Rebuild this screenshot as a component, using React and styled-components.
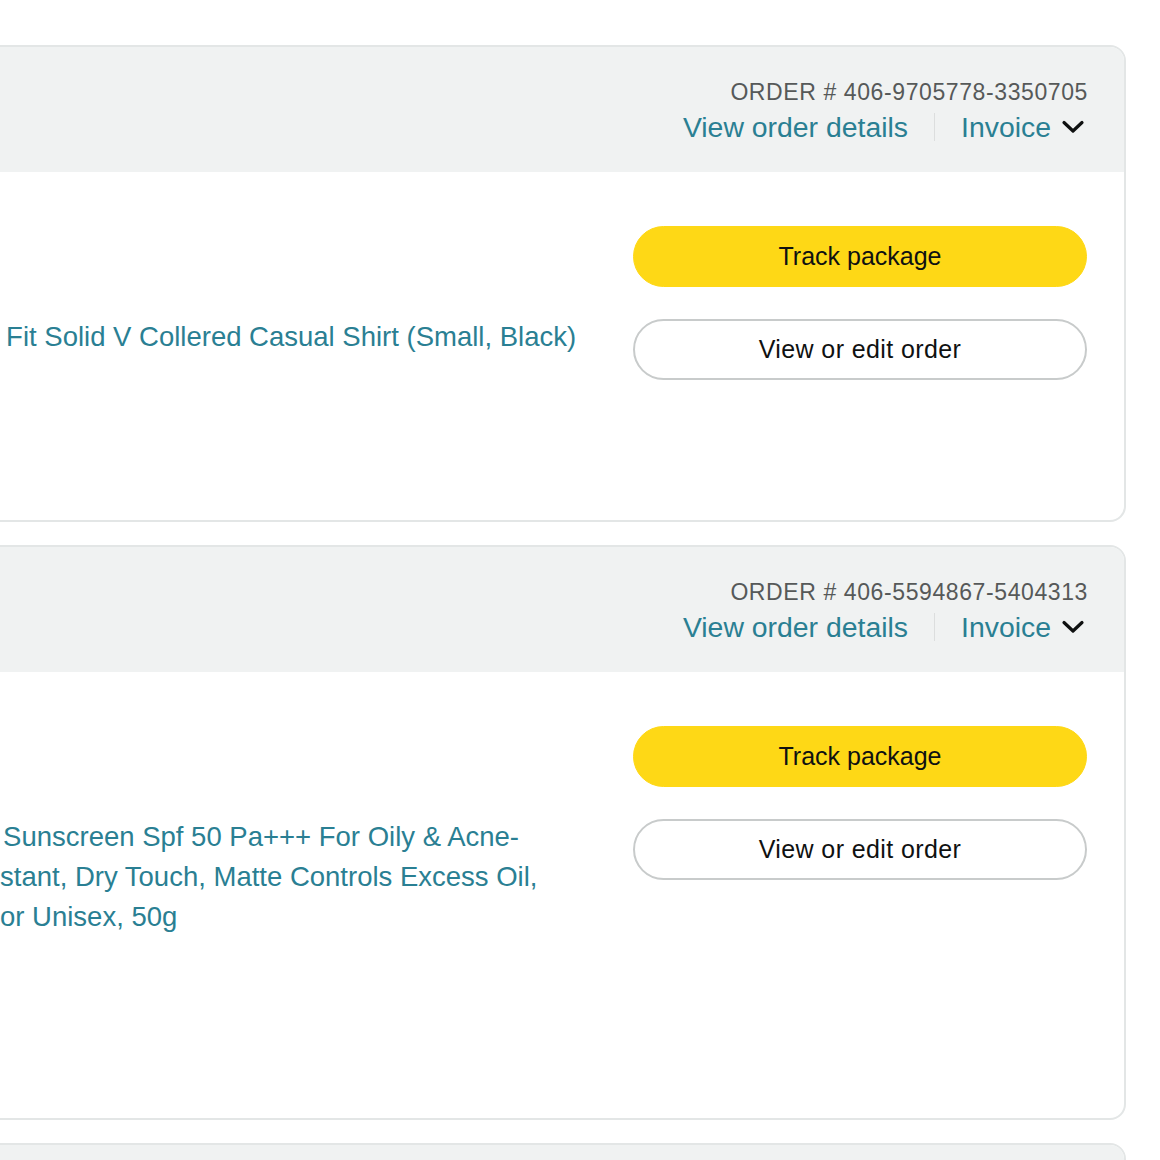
import React from 'react';
import styled, { createGlobalStyle } from 'styled-components';

const orders = [
  {
    id: '406-9705778-3350705',
    lines: ['Slim Fit Solid V Collered Casual Shirt (Small, Black)'],
    bodyHeight: 348,
  },
  {
    id: '406-5594867-5404313',
    lines: [
      'Mild Sunscreen Spf 50 Pa+++ For Oily & Acne-',
      'Resistant, Dry Touch, Matte Controls Excess Oil,',
      'All For Unisex, 50g',
    ],
    bodyHeight: 446,
  },
  {
    id: '406-1120458-7712093',
    lines: ['Cotton Round Neck T-Shirt'],
    bodyHeight: 348,
  },
];

const ChevronDown = () => (
  <svg width="24" height="16" viewBox="0 0 24 16" fill="none">
    <path d="M3 3.5 L12 12 L21 3.5" stroke="#0f1111" strokeWidth="3.2" strokeLinecap="round" strokeLinejoin="round" />
  </svg>
);

const App = () => {
  return (
    <>
      <GlobalStyle />
      <Page>
        <OrderList>
          {orders.map(order => (
            <OrderCard key={order.id}>
              <CardHeader>
                <HeaderRight>
                  <OrderNumber>ORDER # {order.id}</OrderNumber>
                  <HeaderLinks>
                    <TealLink>View order details</TealLink>
                    <Divider />
                    <InvoiceLink>
                      <TealLink>Invoice</TealLink>
                      <ChevronDown />
                    </InvoiceLink>
                  </HeaderLinks>
                </HeaderRight>
              </CardHeader>
              <CardBody $height={order.bodyHeight}>
                <ProductTitle>
                  {order.lines.map((line, index) => (
                    <div key={index}>{line}</div>
                  ))}
                </ProductTitle>
                <Actions>
                  <PillButton $primary>Track package</PillButton>
                  <PillButton>View or edit order</PillButton>
                </Actions>
              </CardBody>
            </OrderCard>
          ))}
        </OrderList>
      </Page>
    </>
  );
};

export default App;

const GlobalStyle = createGlobalStyle`
  html, body {
    margin: 0;
    padding: 0;
    background: #fff;
    overflow: hidden;
  }
  body {
    font-family: "Liberation Sans", Arial, sans-serif;
    color: #0f1111;
  }
`;

const Page = styled.div`
  width: 1160px;
  height: 1160px;
  overflow: hidden;
  padding-top: 45px;
  box-sizing: border-box;
`;

// cards are wider than the view, their left part is cut off
const OrderList = styled.div`
  display: flex;
  flex-direction: column;
  gap: 23px;
  margin-left: -700px;
  margin-right: 34px;
`;

const OrderCard = styled.div`
  border: 2px solid #e3e6e6;
  border-radius: 16px;
  overflow: hidden;
  background: #fff;
  flex-shrink: 0;
`;

const CardHeader = styled.div`
  height: 125px;
  background: #f0f2f2;
  display: flex;
  justify-content: flex-end;
  padding: 30px 37px 0 0;
  box-sizing: border-box;
`;

const HeaderRight = styled.div`
  display: flex;
  flex-direction: column;
  align-items: flex-end;
  gap: 1px;
`;

const OrderNumber = styled.div`
  font-size: 23px;
  line-height: 30px;
  color: #565959;
  letter-spacing: 0.6px;
  margin-right: -1px;
`;

const HeaderLinks = styled.div`
  display: flex;
  align-items: center;
  height: 38px;
`;

const TealLink = styled.span`
  font-size: 28.4px;
  color: #2a7f93;
  cursor: pointer;
`;

const Divider = styled.span`
  width: 1px;
  height: 28px;
  background: #dcdede;
  margin: 0 26px;
`;

const InvoiceLink = styled.span`
  display: flex;
  align-items: center;
  gap: 10px;
  padding-right: 2px;
`;

const CardBody = styled.div`
  display: flex;
  justify-content: space-between;
  height: ${p => p.$height}px;
  padding: 0 37px 0 0;
  box-sizing: border-box;
`;

const ProductTitle = styled.div`
  padding-top: 145px;
  margin-left: 643px;
  font-size: 27.5px;
  line-height: 40px;
  color: #2a7f93;
`;

const Actions = styled.div`
  width: 454px;
  display: flex;
  flex-direction: column;
  gap: 32px;
  padding-top: 54px;
`;

const PillButton = styled.div`
  height: 61px;
  box-sizing: border-box;
  border-radius: 31px;
  display: flex;
  align-items: center;
  justify-content: center;
  font-size: 25px;
  color: #0f1111;
  cursor: pointer;
  background: ${p => (p.$primary ? '#fed816' : '#fff')};
  border: ${p => (p.$primary ? '1px solid #fed816' : '2px solid #c8cbcb')};
  letter-spacing: ${p => (p.$primary ? '0' : '0.4px')};
`;
